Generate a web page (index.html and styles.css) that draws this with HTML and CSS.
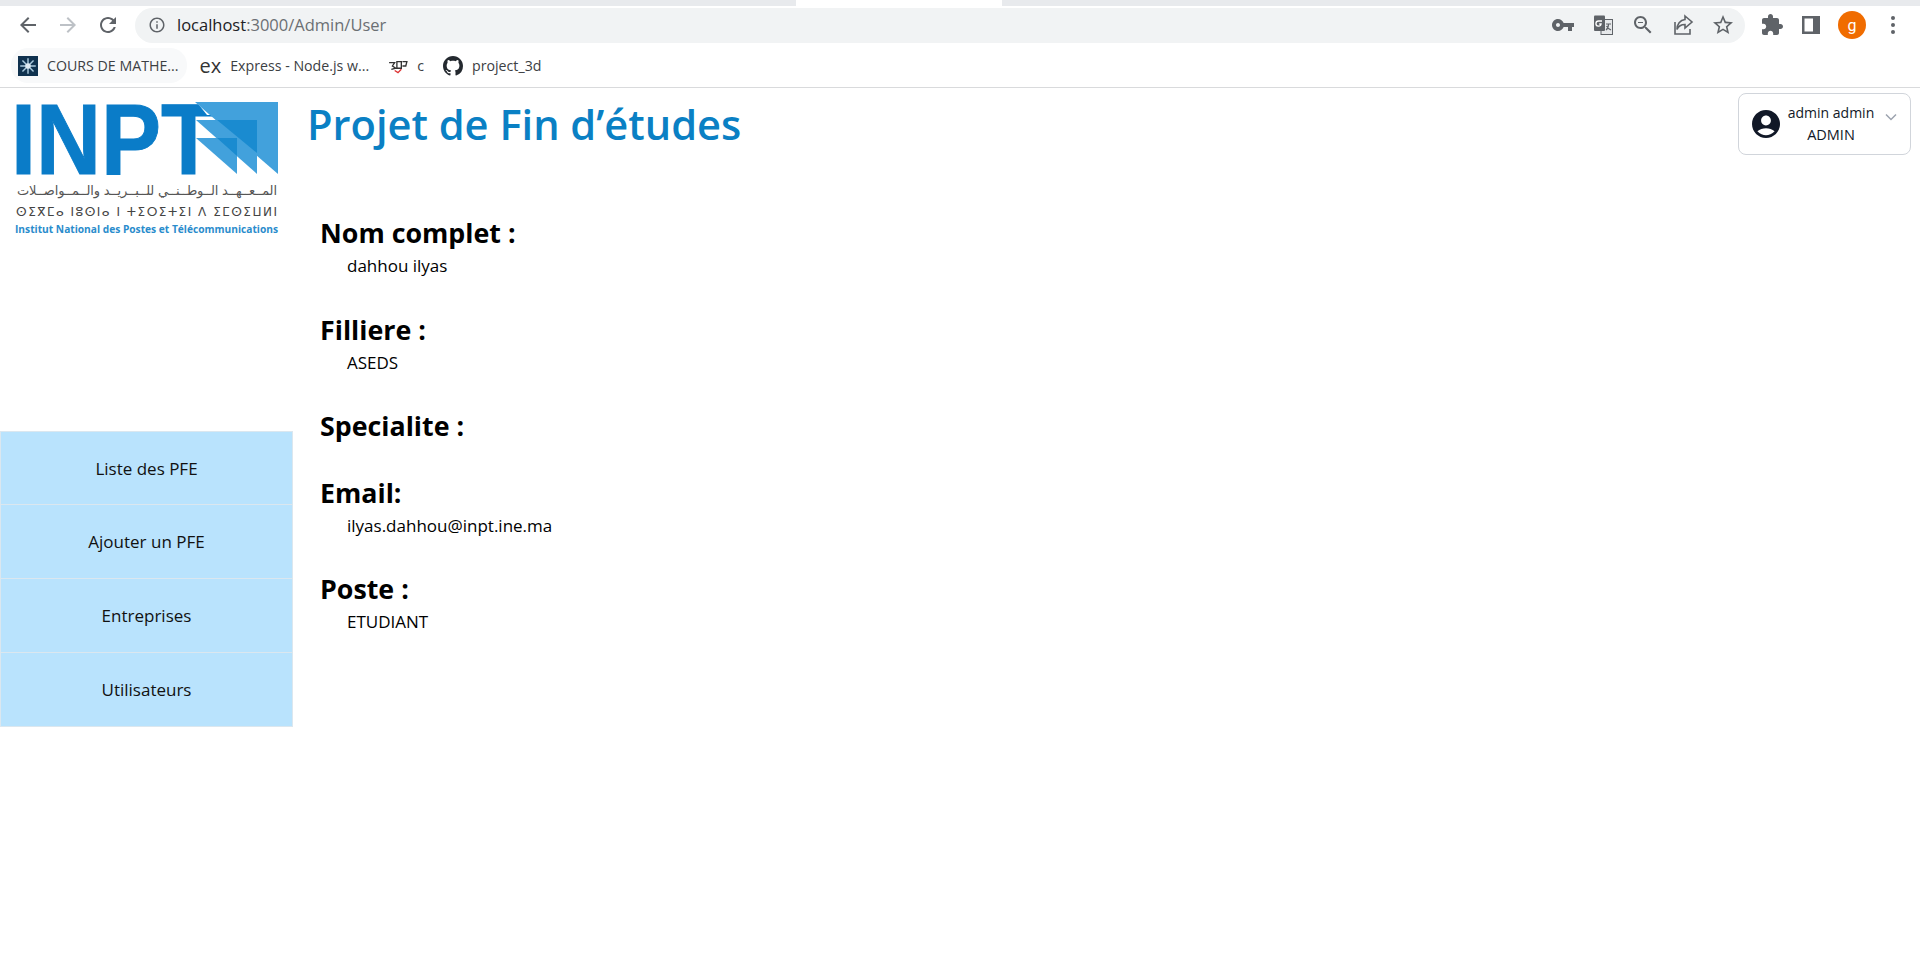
FILE: index.html
```html
<!DOCTYPE html>
<html lang="fr">

<head>
    <meta charset="UTF-8">
    <meta name="viewport" content="width=device-width, initial-scale=1.0">
    <title>Projet de Fin d'études</title>
    <link rel="stylesheet" href="styles.css">
</head>

<body>
    <!-- Barre du navigateur -->
    <div class="tab-strip">
        <div class="tab-piece"></div>
    </div>

    <div class="toolbar">
        <div class="nav-btns">
            <svg class="icon" viewBox="0 0 24 24"><path d="M20 11H7.830l5.590-5.590L12 4l-8 8 8 8 1.410-1.410L7.830 13H20v-2z"/></svg>
            <svg class="icon icon-off" viewBox="0 0 24 24"><path d="M4 11h12.170l-5.590-5.590L12 4l8 8-8 8-1.410-1.410L16.170 13H4v-2z"/></svg>
            <svg class="icon" viewBox="0 0 24 24"><path d="M17.650 6.350C16.200 4.900 14.210 4 12 4c-4.420 0-7.990 3.580-7.990 8s3.570 8 7.990 8c3.730 0 6.840-2.550 7.730-6h-2.080c-.82 2.330-3.040 4-5.650 4-3.310 0-6-2.690-6-6s2.690-6 6-6c1.660 0 3.140.69 4.220 1.780L13 11h7V4l-2.350 2.350z"/></svg>
        </div>

        <div class="url-bar">
            <svg class="icon-small" viewBox="0 0 24 24"><path d="M11 7h2v2h-2zm0 4h2v6h-2zm1-9C6.480 2 2 6.480 2 12s4.480 10 10 10 10-4.480 10-10S17.520 2 12 2zm0 18c-4.410 0-8-3.590-8-8s3.590-8 8-8 8 3.590 8 8-3.590 8-8 8z"/></svg>
            <span class="url-text"><b>localhost</b>:3000/Admin/User</span>
            <div class="url-actions">
                <svg class="icon" viewBox="0 0 24 24"><path d="M12.650 10C11.830 7.670 9.610 6 7 6c-3.310 0-6 2.690-6 6s2.690 6 6 6c2.610 0 4.830-1.670 5.650-4H17v4h4v-4h2v-4H12.650zM7 14c-1.100 0-2-.9-2-2s.9-2 2-2 2 .9 2 2-.9 2-2 2z"/></svg>
                <svg class="icon" viewBox="0 0 24 24">
                    <rect x="10" y="6.500" width="11.500" height="15" fill="#e6e8ea" stroke="#5f6368" stroke-width="1"/>
                    <rect x="3" y="2.500" width="11" height="15.500" rx="1"/>
                    <path d="M11 8H7.500a2.600 2.600 0 1 0 2.600 3H8.200" fill="none" stroke="#fff" stroke-width="1.300"/>
                    <path d="M15 11h5M17.500 11c0 3-1 5-2.500 6M15.500 13c1 2 2.500 3 4.500 4" fill="none" stroke="#5f6368" stroke-width="1.200"/>
                </svg>
                <svg class="icon" viewBox="0 0 24 24"><path d="M15.500 14h-.79l-.28-.27C15.410 12.590 16 11.110 16 9.500 16 5.910 13.090 3 9.500 3S3 5.910 3 9.500 5.910 16 9.500 16c1.610 0 3.090-.59 4.230-1.570l.27.28v.79l5 4.990L20.490 19l-4.990-5zm-6 0C7.010 14 5 11.990 5 9.500S7.010 5 9.500 5 14 7.010 14 9.500 11.990 14 9.500 14zM7 9h5v1H7z"/></svg>
                <svg class="icon" viewBox="0 0 24 24"><path class="line" d="M4 9v12h15v-5M14 3l7 6-7 6v-3.500c-4 0-6.500 1.500-8 5 0-5 3-9.500 8-10z"/></svg>
                <svg class="icon" viewBox="0 0 24 24"><path d="M22 9.240l-7.190-.62L12 2 9.190 8.630 2 9.240l5.460 4.730L5.820 21 12 17.270 18.180 21l-1.630-7.030L22 9.240zM12 15.400l-3.760 2.270 1-4.280-3.320-2.880 4.380-.38L12 6.100l1.710 4.040 4.380.38-3.320 2.880 1 4.280L12 15.400z"/></svg>
            </div>
        </div>

        <div class="browser-actions">
            <svg class="icon" viewBox="0 0 24 24"><path d="M20.500 11H19V7c0-1.100-.9-2-2-2h-4V3.500C13 2.120 11.880 1 10.500 1S8 2.120 8 3.500V5H4c-1.100 0-1.990.9-1.990 2v3.800H3.500c1.490 0 2.700 1.210 2.700 2.700s-1.210 2.700-2.700 2.700H2V20c0 1.100.9 2 2 2h3.800v-1.500c0-1.490 1.210-2.700 2.700-2.700 1.490 0 2.700 1.210 2.700 2.700V22H17c1.100 0 2-.9 2-2v-4h1.500c1.380 0 2.500-1.120 2.500-2.500S21.880 11 20.500 11z"/></svg>
            <svg class="icon" viewBox="0 0 24 24"><path fill-rule="evenodd" d="M3 3h18v18H3zM5.500 5.500v13H14v-13z"/></svg>
            <div class="user-dot">g</div>
            <svg class="icon" viewBox="0 0 24 24"><circle cx="12" cy="5" r="2"/><circle cx="12" cy="12" r="2"/><circle cx="12" cy="19" r="2"/></svg>
        </div>
    </div>

    <!-- Favoris -->
    <div class="bookmarks">
        <a class="bookmark bookmark-active">
            <svg class="fav" viewBox="0 0 18 18">
                <rect width="18" height="18" fill="#10324f"/>
                <path d="M9 2v14M2 9h14M4 4l10 10M14 4L4 14" stroke="#a9c8dc" stroke-width="1.300"/>
                <circle cx="9" cy="9" r="2.500" fill="#dfeaf2"/>
            </svg>
            COURS DE MATHE...
        </a>
        <a class="bookmark"><span class="fav-ex">ex</span>Express - Node.js w...</a>
        <a class="bookmark">
            <svg class="fav" viewBox="0 0 18 18">
                <path d="M1 6h5l-2 3 3 2-4 1M8 5h4v6H8zM13 5h4l-1 4h-3" fill="none" stroke="#333" stroke-width="1.200"/>
                <path d="M6 13l3 2 3-3" fill="none" stroke="#d33" stroke-width="1.200"/>
            </svg>
            c
        </a>
        <a class="bookmark">
            <svg class="fav fav-git" viewBox="0 0 16 16"><path d="M8 0C3.580 0 0 3.580 0 8c0 3.540 2.290 6.530 5.470 7.590.4.070.55-.17.55-.38 0-.19-.01-.82-.01-1.490-2.010.37-2.530-.49-2.690-.94-.09-.23-.48-.94-.82-1.130-.28-.15-.68-.52-.01-.53.63-.01 1.080.58 1.230.82.72 1.210 1.870.87 2.330.66.070-.52.28-.87.51-1.070-1.780-.2-3.640-.89-3.640-3.950 0-.87.31-1.590.82-2.150-.08-.2-.36-1.020.08-2.120 0 0 .67-.21 2.200.82.64-.18 1.320-.27 2-.27.68 0 1.360.09 2 .27 1.530-1.040 2.200-.82 2.200-.82.44 1.100.16 1.920.08 2.120.51.56.82 1.270.82 2.150 0 3.070-1.870 3.750-3.650 3.950.29.25.54.73.54 1.480 0 1.070-.01 1.930-.01 2.200 0 .21.15.46.55.38A8.013 8.013 0 0016 8c0-4.420-3.580-8-8-8z"/></svg>
            project_3d
        </a>
    </div>

    <!-- Page -->
    <div class="page">
        <aside class="sidebar">
            <svg class="logo" viewBox="0 80 293 158">
                <text class="logo-inpt" x="11" y="174" textLength="205" lengthAdjust="spacingAndGlyphs">INPT</text>
                <polygon points="195,100 207,115 220,115 220,100" fill="#fff"/>
                <polygon points="195,102 278,102 278,174" fill="#42a1dc"/>
                <polygon points="196,120 257,120 257,174" fill="#42a1dc"/>
                <polygon points="217,120 257,120 257,153" fill="#1a8bd0"/>
                <polygon points="196,138 237,138 237,174" fill="#42a1dc"/>
                <polygon points="217,138 237,138 237,156" fill="#1a8bd0"/>
                <text class="logo-ar" x="277" y="195" textLength="260" lengthAdjust="spacing" direction="rtl">المــعــهــد الــوطــنــي للــبــريــد والــمــواصــلات</text>
                <text class="logo-tz" x="16" y="216" textLength="261" lengthAdjust="spacing">ⵙⵉⴳⵎⴰ ⵏⵓⵙⵏⴰ ⵏ ⵜⵉⵔⵉⵜⵉⵏ ⴷ ⵉⵎⵙⵉⵡⵍⵏ</text>
                <text class="logo-name" x="15" y="233" textLength="263" lengthAdjust="spacingAndGlyphs">Institut National des Postes et Télécommunications</text>
            </svg>

            <nav class="side-nav">
                <a href="#">Liste des PFE</a>
                <a href="#">Ajouter un PFE</a>
                <a href="#">Entreprises</a>
                <a href="#">Utilisateurs</a>
            </nav>
        </aside>

        <main class="content">
            <header class="content-head">
                <h1>Projet de Fin d’études</h1>
                <div class="profile">
                    <svg class="avatar" viewBox="2 2 20 20"><path d="M12 2C6.480 2 2 6.480 2 12s4.480 10 10 10 10-4.480 10-10S17.520 2 12 2zm0 4c1.930 0 3.500 1.570 3.500 3.500S13.930 13 12 13s-3.500-1.570-3.500-3.500S10.070 6 12 6zm0 14c-2.030 0-4.430-.82-6.140-2.880C7.550 15.800 9.680 15 12 15s4.450.8 6.140 2.120C16.430 19.180 14.030 20 12 20z"/></svg>
                    <div class="profile-text">
                        <span class="profile-name">admin admin</span>
                        <span class="profile-role">ADMIN</span>
                    </div>
                    <svg class="chevron" viewBox="0 0 12 8"><path d="M1 1.500l5 5 5-5"/></svg>
                </div>
            </header>

            <section class="infos">
                <div class="info">
                    <h2>Nom complet :</h2>
                    <p>dahhou ilyas</p>
                </div>
                <div class="info">
                    <h2>Filliere :</h2>
                    <p>ASEDS</p>
                </div>
                <div class="info">
                    <h2>Specialite :</h2>
                </div>
                <div class="info">
                    <h2>Email:</h2>
                    <p>ilyas.dahhou@inpt.ine.ma</p>
                </div>
                <div class="info">
                    <h2>Poste :</h2>
                    <p>ETUDIANT</p>
                </div>
            </section>
        </main>
    </div>
</body>

</html>
```

FILE: styles.css
```css
* {
    box-sizing: border-box;
}

body {
    margin: 0;
    height: 976px;
    overflow: hidden;
    font-family: "Open Sans", "Noto Sans", sans-serif;
    background-color: #fff;
    color: #000;
}

/* Barre du navigateur */
.tab-strip {
    height: 6px;
    background-color: #e8eaed;
    display: flex;
    padding-left: 796px;
}

.tab-piece {
    width: 206px;
    background-color: #fff;
}

.toolbar {
    height: 38px;
    display: flex;
    align-items: center;
    padding-left: 16px;
    background-color: #fff;
}

.icon {
    width: 24px;
    height: 24px;
    fill: #5f6368;
    flex: none;
}

.icon-off {
    fill: #bdc1c6;
}

.line {
    fill: none;
    stroke: #5f6368;
    stroke-width: 1.600;
}

.nav-btns {
    display: flex;
    gap: 16px;
    width: 119px;
}

.url-bar {
    width: 1610px;
    height: 35px;
    border-radius: 18px;
    background-color: #f1f3f4;
    display: flex;
    align-items: center;
    padding-left: 13px;
    padding-right: 10px;
}

.icon-small {
    width: 18px;
    height: 18px;
    fill: #5f6368;
    flex: none;
}

.url-text {
    margin-left: 11px;
    margin-top: -2px;
    font-size: 16.500px;
    color: #6b6f73;
}

.url-text b {
    font-weight: 400;
    color: #202124;
}

.url-actions {
    margin-left: auto;
    display: flex;
    gap: 16px;
}

.browser-actions {
    display: flex;
    align-items: center;
    margin-left: 15px;
    gap: 15px;
}

.user-dot {
    width: 28px;
    height: 28px;
    border-radius: 50%;
    background-color: #f06c00;
    color: #fff;
    font-family: Roboto, sans-serif;
    font-size: 16px;
    display: flex;
    align-items: center;
    justify-content: center;
}

/* Favoris */
.bookmarks {
    height: 44px;
    display: flex;
    align-items: center;
    padding-left: 11px;
    border-bottom: 1px solid #d9dadc;
    gap: 5px;
}

.bookmark {
    height: 35px;
    display: flex;
    align-items: center;
    gap: 9px;
    padding: 0 7px;
    border-radius: 17px;
    font-size: 14.200px;
    color: #3c4043;
    white-space: nowrap;
}

.bookmark-active {
    background-color: #f8f9fa;
    padding-right: 9px;
}

.fav {
    width: 20px;
    height: 20px;
    flex: none;
}

.fav-git {
    fill: #24292f;
}

.fav-ex {
    font-size: 20px;
    color: #333;
    line-height: 1;
}

/* Page */
.page {
    display: flex;
}

.sidebar {
    width: 293px;
    flex: none;
}

.logo {
    display: block;
    width: 293px;
    height: 158px;
    margin-top: -8px;
}

.logo-inpt {
    font-family: "Liberation Sans", sans-serif;
    font-weight: 700;
    font-size: 100px;
    fill: #0a7cc8;
    stroke: #0a7cc8;
    stroke-width: 1;
}

.logo-ar {
    font-family: "DejaVu Sans", sans-serif;
    font-size: 13px;
    fill: #555;
}

.logo-tz {
    font-family: "DejaVu Sans", sans-serif;
    font-size: 12px;
    fill: #444;
}

.logo-name {
    font-family: "Open Sans", sans-serif;
    font-weight: 700;
    font-size: 10px;
    fill: #2a8ccc;
}

.side-nav {
    margin-top: 193px;
}

.side-nav a {
    display: flex;
    align-items: center;
    justify-content: center;
    height: 74px;
    background-color: #b9e3fd;
    border: 1px solid #dbe7ef;
    color: #111;
    font-size: 17px;
    text-decoration: none;
}

.side-nav a + a {
    border-top: 0;
}

/* Contenu */
.content {
    flex: 1;
    padding-left: 14px;
    padding-right: 9px;
}

.content-head {
    display: flex;
    justify-content: space-between;
    align-items: flex-start;
    padding-top: 5px;
}

.content-head h1 {
    margin: 4px 0 0;
    font-size: 41.600px;
    font-weight: 600;
    line-height: 54px;
    color: #0a80c4;
}

.profile {
    width: 173px;
    height: 62px;
    border: 1px solid #d1d5db;
    border-radius: 8px;
    display: flex;
    align-items: center;
    padding: 0 13px;
    gap: 6px;
    color: #111827;
}

.avatar {
    width: 28px;
    height: 28px;
    fill: #111827;
    flex: none;
}

.profile-text {
    display: flex;
    flex-direction: column;
    align-items: center;
    flex: 1;
    line-height: 22px;
}

.profile-name {
    font-size: 14px;
    font-weight: 500;
    white-space: nowrap;
}

.profile-role {
    font-size: 14.500px;
}

.chevron {
    width: 12px;
    height: 8px;
    flex: none;
    margin-top: -14px;
    margin-left: 3px;
    fill: none;
    stroke: #9ca3af;
    stroke-width: 1.500;
}

.infos {
    margin-top: 60px;
    padding-left: 13px;
}

.info {
    margin-bottom: 30.500px;
}

.info h2 {
    margin: 0;
    font-size: 26.800px;
    font-weight: 700;
    line-height: 36px;
}

.info p {
    margin: 0;
    padding-left: 27px;
    font-size: 17px;
    line-height: 30px;
}
```
